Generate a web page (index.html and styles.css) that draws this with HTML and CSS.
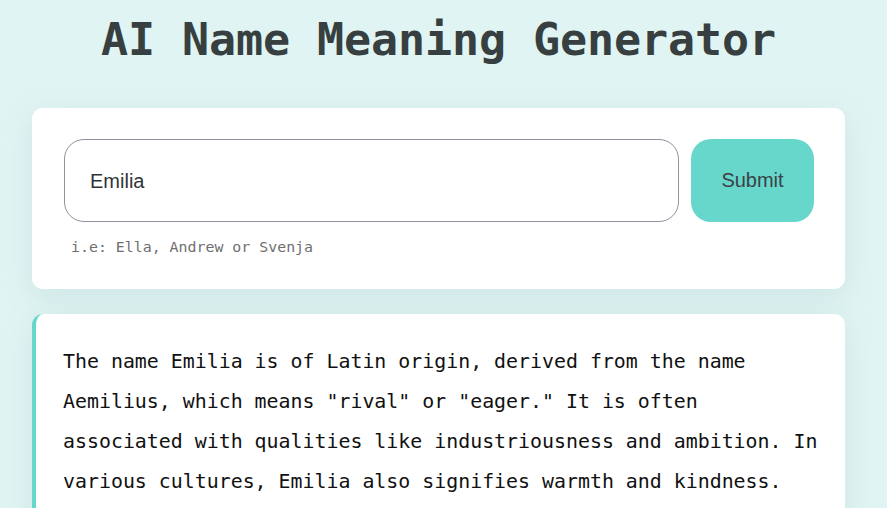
FILE: index.html
```html
<!DOCTYPE html>
<html lang="en">
<head>
<meta charset="utf-8">
<title>AI Name Meaning Generator</title>
<link rel="stylesheet" href="styles.css">
</head>
<body>
<main class="page">
  <h1 class="title">AI Name Meaning Generator</h1>
  <section class="card form-card">
    <div class="form-row">
      <div class="input">Emilia</div>
      <button class="submit" type="button">Submit</button>
    </div>
    <p class="hint">i.e: Ella, Andrew or Svenja</p>
  </section>
  <section class="card result-card">
    <p class="result">The name Emilia is of Latin origin, derived from the name Aemilius, which means "rival" or "eager." It is often associated with qualities like industriousness and ambition. In various cultures, Emilia also signifies warmth and kindness.</p>
  </section>
</main>
</body>
</html>
```

FILE: styles.css
```css
html, body {
  margin: 0;
  padding: 0;
  height: 100%;
  overflow: hidden;
}
body {
  background: #e0f4f3;
  font-family: "DejaVu Sans Mono", "Liberation Mono", monospace;
}
.page {
  padding: 0 42px 0 32px;
  display: flex;
  flex-direction: column;
}
.title {
  margin: 12px 0 0;
  height: 96px;
  font-size: 45px;
  line-height: 56px;
  font-weight: bold;
  color: #373f40;
  text-align: center;
  letter-spacing: -0.1px;
}
.card {
  background: #ffffff;
  border-radius: 11px;
  box-shadow: 0 8px 30px rgba(120, 170, 170, 0.18);
}
.form-card {
  padding: 31px 31px 30px 32px;
  height: 181px;
  box-sizing: border-box;
}
.form-row {
  display: flex;
  gap: 12px;
}
.input {
  flex: 1;
  height: 83px;
  box-sizing: border-box;
  border: 1px solid #958f9f;
  border-radius: 20px;
  padding: 1px 25px 0;
  display: flex;
  align-items: center;
  font-family: "Liberation Sans", Arial, sans-serif;
  font-size: 20px;
  color: #2f3438;
}
.submit {
  width: 123px;
  height: 83px;
  border: none;
  border-radius: 20px;
  background: #68d7cb;
  font-family: "Liberation Sans", Arial, sans-serif;
  font-size: 20px;
  color: #3b4247;
  padding: 0;
}
.hint {
  margin: 15px 0 0 7px;
  font-size: 14.9px;
  line-height: 20px;
  color: #6f6f6f;
}
.result-card {
  margin-top: 25px;
  border-left: 4px solid #68d7cb;
  padding: 28px 24px 30px 27px;
}
.result {
  margin: 0;
  font-size: 19.9px;
  line-height: 40px;
  color: #111111;
}
```
